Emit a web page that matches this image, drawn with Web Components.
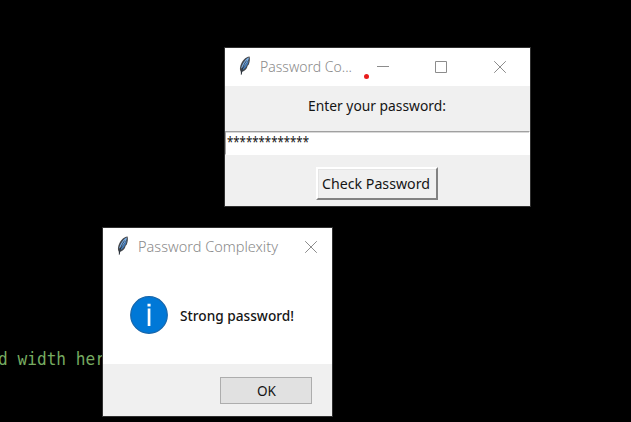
<!DOCTYPE html>
<html lang="en">
<head>
<meta charset="utf-8">
<title>Password Complexity</title>
<style>
html,body{margin:0;height:100%;background:#000;overflow:hidden}
desk-top{width:631px;height:422px}
</style>
</head>
<body>
<desk-top></desk-top>
<script>
const define = (name, html, setup) => customElements.define(name, class extends HTMLElement {
  connectedCallback() {
    if (this.shadowRoot) return;
    this.attachShadow({ mode: 'open' }).innerHTML = html;
    if (setup) setup(this, this.shadowRoot);
  }
});

/* One line of text set to an exact width */
define('fit-text', `
<style>
:host{display:block;height:20px;flex:none}
svg{display:block;width:100%;height:20px;overflow:visible}
text{font:var(--font,14px "Noto Sans",sans-serif);fill:currentColor;white-space:pre}
</style>
<svg><text y="15" lengthAdjust="spacingAndGlyphs"></text></svg>`, (el, root) => {
  const t = root.querySelector('text');
  t.textContent = el.getAttribute('text');
  t.setAttribute('textLength', el.getAttribute('width'));
  el.style.width = el.getAttribute('width') + 'px';
});

define('feather-icon', `
<style>:host{display:block;width:14px;height:20px;flex:none}svg{display:block}</style>
<svg width="14" height="20" viewBox="0 0 14 20">
<path d="M11.600.6C7.300 1 4 5.200 2.400 9.700c-.6 2.200-.7 4.400.2 5.600l.7 4 .9-3.600c2.500-.6 4.700-2.800 5.300-5.200l-.1-.6 1.300-1.200C11.900 6.200 12.200 3 11.600.6Z" fill="#45484d"/>
<path d="M10.900 1.400C7.600 2.500 4.300 7.600 3.100 12.500c1.900-.8 5-4 6.100-6.700C10.400 4 10.800 2.700 10.900 1.400Z" fill="#7db2ea"/>
<path d="M10.500 4.200C8.400 8 5.500 11.500 3.900 14.200c2.500-.9 4.300-2.900 4.900-4.900C10 8 10.600 6 10.500 4.200Z" fill="#4180c6"/>
<path d="M8.700 4.500C6.300 7.600 4.300 11.500 3.200 18.500" fill="none" stroke="#1b2531" stroke-width=".75"/>
</svg>`);

define('caption-button', `
<style>:host{display:block;width:12px;height:12px;flex:none}svg{display:block;fill:none;stroke:#8c8c8c}</style>
<svg width="12" height="12" viewBox="0 0 12 12"><path/></svg>`, (el, root) => {
  root.querySelector('path').setAttribute('d', {
    min: 'M0 5.500H12', max: 'M.5.5H11.500V11.500H.5Z', close: 'M.2.2 11.800 11.800M11.800.2.2 11.800'
  }[el.getAttribute('kind')]);
});

define('app-window', `
<style>
:host{display:flex;flex-direction:column;box-sizing:border-box;border:1px solid #303030;background:#f0f0f0}
header{display:flex;align-items:center;box-sizing:border-box;height:38px;padding:0 var(--end,24px) 0 13px;background:#fff;color:#8a8a8a;flex:none}
feather-icon{margin:-2px 8px 0 0}
fit-text{--font:300 15px "Noto Sans",sans-serif}
nav{display:flex;gap:46px;margin-left:auto}
::slotted(caption-button:last-of-type){margin-left:1px}
</style>
<header><feather-icon></feather-icon><fit-text></fit-text><nav><slot name="controls"></slot></nav></header>
<slot></slot>`, (el, root) => {
  const t = root.querySelector('fit-text');
  const s = document.createElement('fit-text');
  s.setAttribute('text', el.getAttribute('caption'));
  s.setAttribute('width', el.getAttribute('caption-width'));
  t.replaceWith(s);
});

define('password-form', `
<style>
:host{display:flex;flex-direction:column;align-items:center;color:#151515;height:120px}
.label{margin-top:10px;margin-left:-1px}
.entry{box-sizing:border-box;width:305px;height:24px;margin-top:15px;background:#fff;border:solid;border-width:1px;border-color:#a0a0a0 #fff #fff #a0a0a0;padding-left:1px;box-shadow:inset 0 1px #d8d8d8}
.button{box-sizing:border-box;width:122px;height:33px;margin-top:12px;margin-left:-2px;border:2px solid;border-color:#fff #828282 #828282 #fff;display:flex;padding:5px 0 0 4px;box-shadow:inset 1px 1px #e5e5e5}
</style>
<fit-text class="label" text="Enter your password:" width="138"></fit-text>
<div class="entry"><fit-text text="*************" width="82"></fit-text></div>
<div class="button"><fit-text text="Check Password" width="108"></fit-text></div>`);

define('info-icon', `
<style>:host{display:block;width:38px;height:38px;flex:none}svg{display:block}</style>
<svg width="38" height="38" viewBox="0 0 38 38"><circle cx="19" cy="19" r="18.300" fill="#0078d7" stroke="#1766ab" stroke-width="1.200"/><path d="M17.700 12.500h2.700V30h-2.700zM17.500 7.800h3.100v2.700h-3.100z" fill="#fff"/></svg>`);

define('message-body', `
<style>
:host{display:flex;flex-direction:column;height:150px;color:#151515}
main{box-sizing:border-box;height:98px;background:#fff;display:flex;align-items:flex-start;padding:30px 0 0 27px;gap:12px}
main fit-text{margin-top:10px;--font:500 13.500px "Noto Sans",sans-serif}
footer{height:52px;display:flex;justify-content:flex-end;box-sizing:border-box;padding:13px 20px 0 0;background:#f0f0f0}
.ok{box-sizing:border-box;width:92px;height:27px;background:#e1e1e1;border:1px solid #adadad;display:flex;justify-content:center;padding-top:3px}
</style>
<main><info-icon></info-icon><fit-text text="Strong password!" width="114"></fit-text></main>
<footer><div class="ok"><fit-text text="OK" width="19"></fit-text></div></footer>`);

define('desk-top', `
<style>
:host{display:block;position:relative;background:#000;overflow:hidden}
.code{position:absolute;left:-2px;top:350px;color:#76ab60;--font:17px "DejaVu Sans Mono",monospace}
.main{position:absolute;left:224px;top:47px;width:307px;height:160px}
.dialog{position:absolute;left:102px;top:227px;width:231px;height:190px;--end:15px}
.dot{position:absolute;left:364px;top:74px;width:5px;height:5px;border-radius:50%;background:#e81c1c}
</style>
<fit-text class="code" text="d width her" width="107"></fit-text>
<app-window class="main" caption="Password Co..." caption-width="92">
<caption-button slot="controls" kind="min"></caption-button><caption-button slot="controls" kind="max"></caption-button><caption-button slot="controls" kind="close"></caption-button>
<password-form></password-form>
</app-window>
<div class="dot"></div>
<app-window class="dialog" caption="Password Complexity" caption-width="140">
<caption-button slot="controls" kind="close"></caption-button>
<message-body></message-body>
</app-window>`);
</script>
</body>
</html>
